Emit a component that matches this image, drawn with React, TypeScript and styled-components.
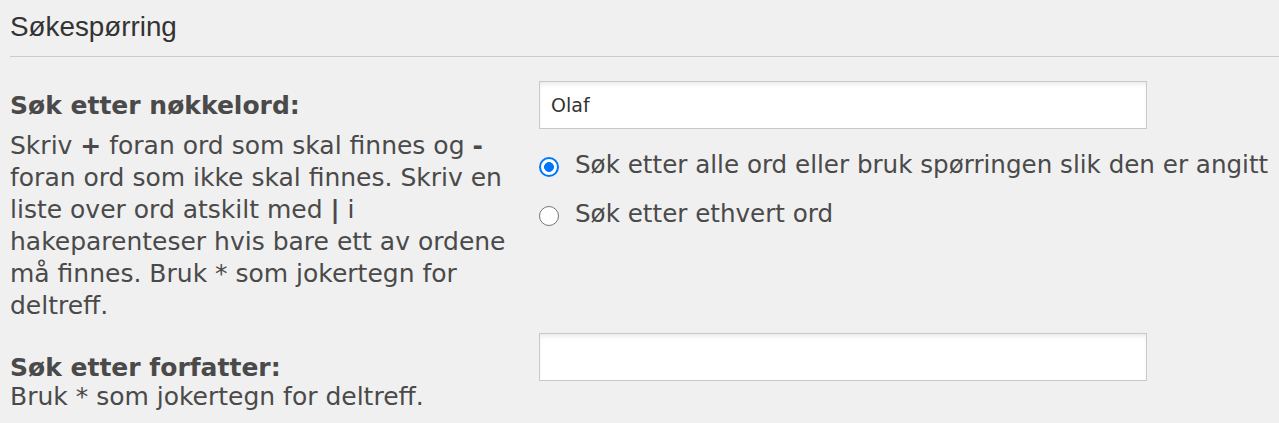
import React from "react";
import styled, { createGlobalStyle } from "styled-components";

const GlobalStyle = createGlobalStyle`
  html, body {
    margin: 0;
    padding: 0;
    background: #f0f0f0;
  }
  body {
    font-family: "DejaVu Sans", Verdana, sans-serif;
    color: #4a4a4a;
  }
`;

const Page = styled.div`
  padding: 0 0 0 10px;
  width: 1269px;
  height: 423px;
  overflow: hidden;
`;

const Title = styled.h3`
  margin: 0;
  padding-top: 11px;
  font-family: "Liberation Sans", Arial, sans-serif;
  font-weight: normal;
  font-size: 27.8px;
  line-height: 32px;
  color: #333333;
  border-bottom: 1px solid #cccccc;
  padding-bottom: 13px;
`;

const Row = styled.div<{ $top: number }>`
  display: grid;
  grid-template-columns: 505px 1fr;
  column-gap: 24px;
  margin-top: ${(p) => p.$top}px;
`;

const Term = styled.div<{ $offset: number }>`
  padding-top: ${(p) => p.$offset}px;
  font-size: 25px;
`;

const Label = styled.label`
  display: block;
  font-weight: bold;
  line-height: 28px;
  color: #4a4a4a;
`;

const Explain = styled.div<{ $gap: number }>`
  margin-top: ${(p) => p.$gap}px;
  line-height: 32px;
  color: #4a4a4a;
`;

const Definition = styled.div`
  display: flex;
  flex-direction: column;
  align-items: flex-start;
`;

const TextInput = styled.input`
  box-sizing: border-box;
  width: 608px;
  height: 48px;
  border: 1px solid #c9c9c9;
  background: #ffffff;
  box-shadow: inset 0 4px 6px -3px rgba(0, 0, 0, 0.12);
  padding: 0 11px;
  font-family: "DejaVu Sans", Verdana, sans-serif;
  font-size: 19px;
  color: #333333;
  outline: none;
  margin: 0;
`;

const RadioList = styled.div`
  display: flex;
  flex-direction: column;
  gap: 17px;
  margin-top: 20px;
`;

const RadioItem = styled.label`
  display: flex;
  align-items: center;
  gap: 16px;
  height: 32px;
  font-size: 24.6px;
  line-height: 32px;
  white-space: nowrap;
  color: #4a4a4a;
`;

const Radio = styled.input`
  appearance: none;
  -webkit-appearance: none;
  box-sizing: border-box;
  width: 20px;
  height: 20px;
  margin: 4px 0 0 0;
  border-radius: 50%;
  border: 1.5px solid #767676;
  background: #ffffff;
  flex-shrink: 0;

  &:checked {
    border: 2.5px solid #0075ff;
    background: radial-gradient(circle, #0075ff 0 4.6px, #ffffff 5.2px);
  }
`;

export default function App() {
  return (
    <Page>
      <GlobalStyle />
      <Title>Søkespørring</Title>

      <Row $top={24}>
        <Term $offset={11}>
          <Label htmlFor="keywords">Søk etter nøkkelord:</Label>
          <Explain $gap={10}>
            Skriv <strong>+</strong> foran ord som skal finnes og <strong>-</strong>{" "}
            foran ord som ikke skal finnes. Skriv en liste over ord atskilt med{" "}
            <strong>|</strong> i hakeparenteser hvis bare ett av ordene må finnes.
            Bruk * som jokertegn for deltreff.
          </Explain>
        </Term>
        <Definition>
          <TextInput id="keywords" type="text" defaultValue="Olaf" />
          <RadioList>
            <RadioItem>
              <Radio type="radio" name="terms" defaultChecked />
              Søk etter alle ord eller bruk spørringen slik den er angitt
            </RadioItem>
            <RadioItem>
              <Radio type="radio" name="terms" />
              Søk etter ethvert ord
            </RadioItem>
          </RadioList>
        </Definition>
      </Row>

      <Row $top={11}>
        <Term $offset={21}>
          <Label htmlFor="author">Søk etter forfatter:</Label>
          <Explain $gap={-1}>Bruk * som jokertegn for deltreff.</Explain>
        </Term>
        <Definition>
          <TextInput id="author" type="text" />
        </Definition>
      </Row>
    </Page>
  );
}
